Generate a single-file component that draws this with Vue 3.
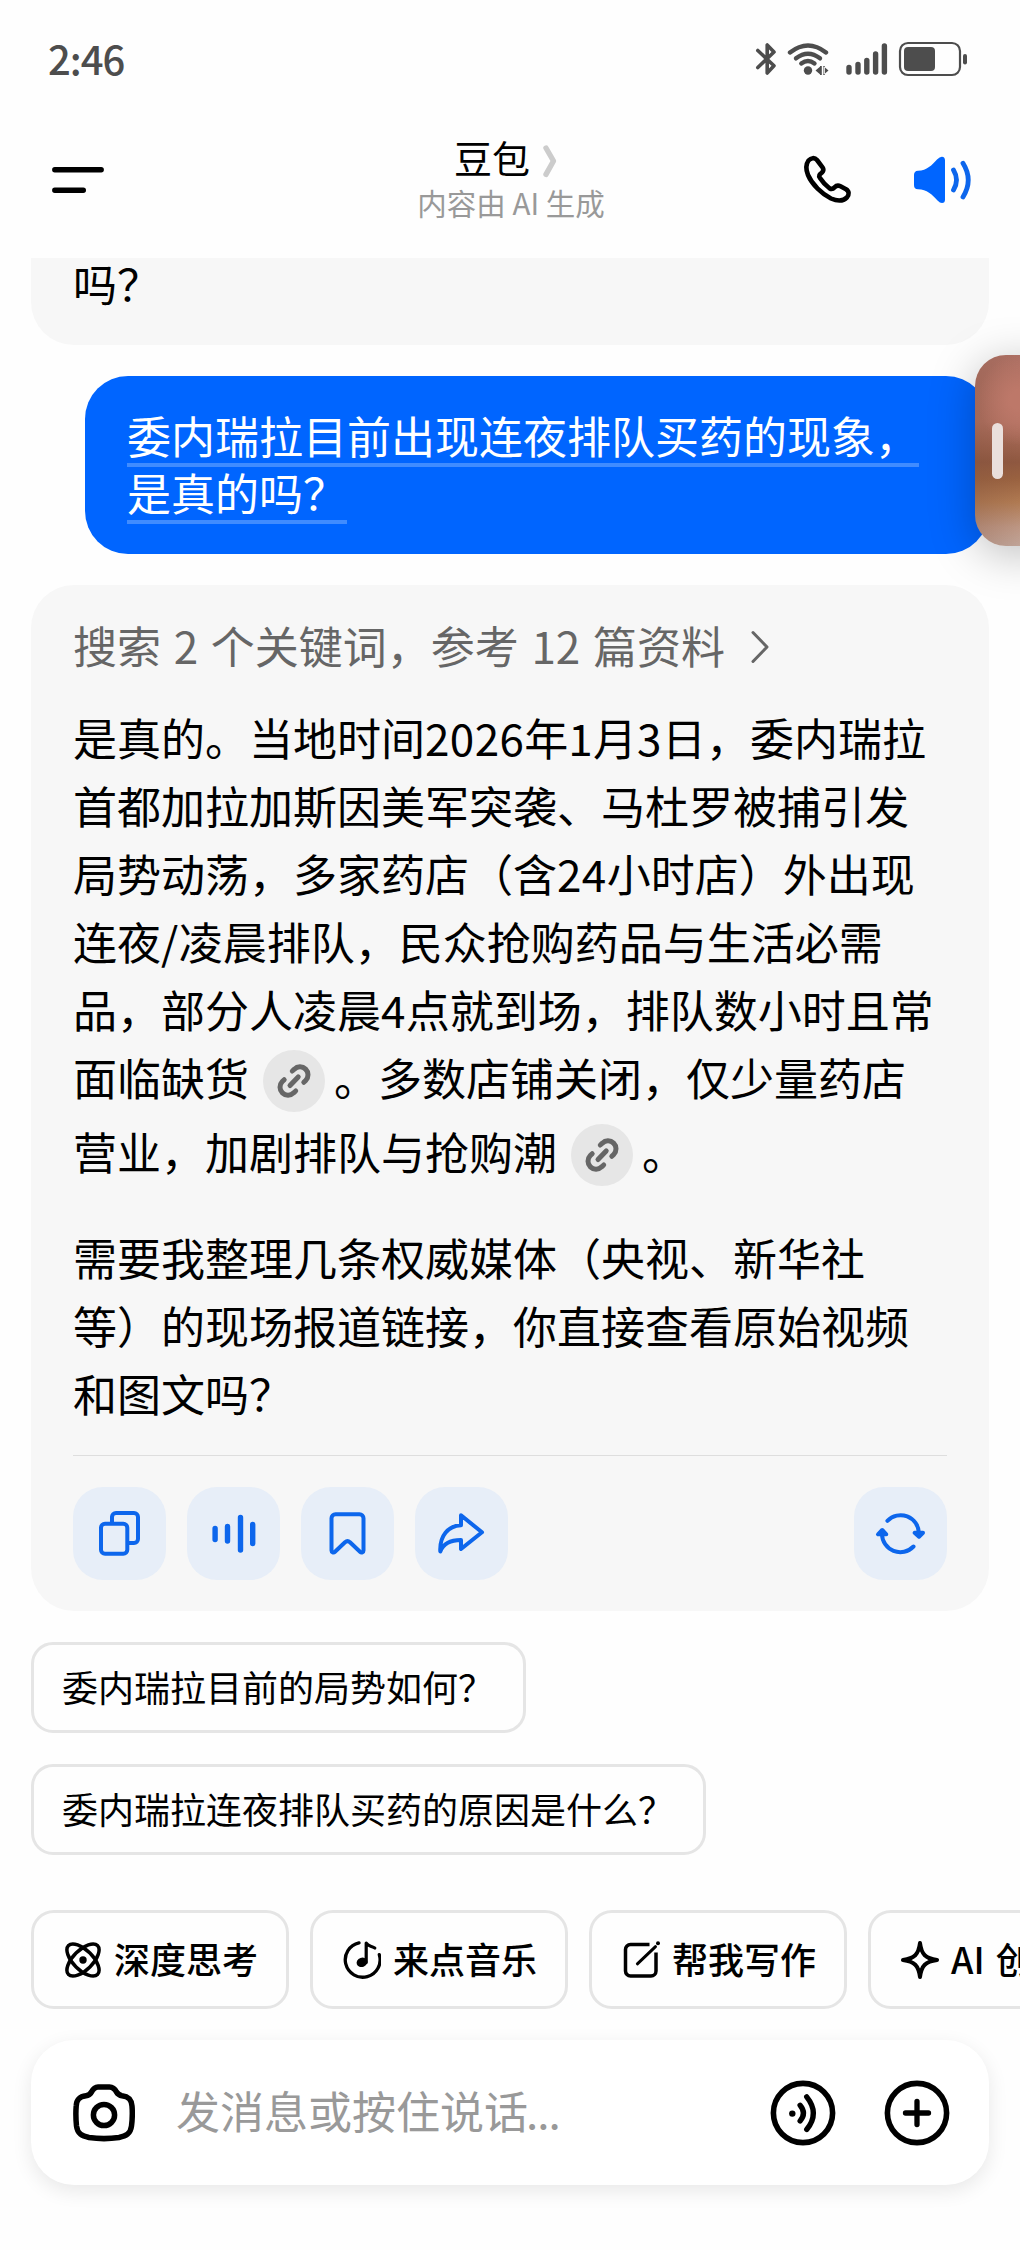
<script setup>
const answerLines = [
  [{ t: '是真的。当地时间' }, { n: '2026' }, { t: '年' }, { n: '1' }, { t: '月' }, { n: '3' }, { t: '日，委内瑞拉' }],
  [{ t: '首都加拉加斯因美军突袭、马杜罗被捕引发' }],
  [{ t: '局势动荡，多家药店（含' }, { n: '24' }, { t: '小时店）外出现' }],
  [{ t: '连夜' }, { n: '/' }, { t: '凌晨排队，民众抢购药品与生活必需' }],
  [{ t: '品，部分人凌晨' }, { n: '4' }, { t: '点就到场，排队数小时且常' }],
  [{ t: '面临缺货' }, { link: true }, { t: '。多数店铺关闭，仅少量药店' }],
  [{ t: '营业，加剧排队与抢购潮' }, { link: true }, { t: '。' }],
]
const followUp = ['需要我整理几条权威媒体（央视、新华社', '等）的现场报道链接，你直接查看原始视频', '和图文吗？']
const suggestions = ['委内瑞拉目前的局势如何？', '委内瑞拉连夜排队买药的原因是什么？']
const chips = [
  { icon: 'think', label: '深度思考' },
  { icon: 'music', label: '来点音乐' },
  { icon: 'write', label: '帮我写作' },
  { icon: 'star', label: 'AI 创作' },
]
</script>

<template>
  <div class="screen">
    <header class="top">
      <div class="status">
        <span class="time">2:46</span>
        <svg class="status-icons" width="220" height="44" viewBox="750 37 220 44" fill="none" stroke="#4d4d4d" stroke-linecap="round" stroke-linejoin="round">
          <path stroke-width="3.6" d="M757.8 50.5 L774 65.800 L767.200 73 V60 M757.800 67.500 L774 52 L767.200 45 V57" />
          <g stroke-width="4.400">
            <path d="M790 52.500 Q808 38.500 826 52.500" />
            <path d="M796 58.300 Q808 49 820 58.300" />
            <path d="M801.300 63.500 Q808 58.500 814.500 63.500" />
          </g>
          <circle cx="808" cy="70.500" r="4.200" fill="#4d4d4d" stroke="none" />
          <path fill="#4d4d4d" stroke="none" d="M815.500 70.500l5-4.300v8.600zM828.500 70.500l-5-4.300v8.600zM820 66h1.800v9h-1.800zM823 66h1.800v9h-1.800z" />
          <path stroke-width="5.400" d="M849 67.500V72M858 64.500V72M866.800 60.500V72M875.600 54V72M884.400 46V72" />
          <rect x="900" y="43" width="60" height="32" rx="8" stroke-width="2.200" />
          <rect x="904" y="47" width="31" height="24" rx="4" fill="#4d4d4d" stroke="none" />
          <path stroke-width="4" d="M965 56V62.500" />
        </svg>
      </div>
      <nav class="nav">
        <svg class="menu" width="60" height="40" viewBox="48 160 60 40" stroke="#000" stroke-width="5.400" stroke-linecap="round">
          <path d="M54.800 169.700H101.200M54.800 190.300H83.300" />
        </svg>
        <div class="heading">
          <div class="title">
            <span>豆包</span>
            <svg width="28" height="48" viewBox="0 0 28 48" fill="none" stroke="#ccc" stroke-width="5.400" stroke-linecap="round" stroke-linejoin="round">
              <path d="M6 15 L13.500 28 L6 41.300" />
            </svg>
          </div>
          <div class="subtitle">内容由 AI 生成</div>
        </div>
        <div class="nav-actions">
          <svg width="56" height="56" viewBox="0 0 56 56" fill="none" stroke="#000" stroke-width="4.600" stroke-linejoin="round">
            <path d="M17 8 L22.500 15.300 C24 17.500 23.800 18.800 22 20.500 C19.500 22.500 18.300 23.500 20 26 C22.500 30 26 33.500 29.500 36.200 C31.500 37.500 32.800 37.300 34.500 35.400 C36.500 33.300 38.300 33.200 40.500 34.300 L46 37.300 C49.300 39.300 49.300 42.500 47 45.300 C43.500 49 37.500 49.300 31 46.500 C22 42 12 32.500 8 23 C5.800 17.500 6 12 8.500 8.500 C11 5.800 14.500 5.200 17 8Z" />
          </svg>
          <svg width="64" height="56" viewBox="0 0 64 56" fill="none" stroke-linecap="round">
            <path fill="#0065ff" d="M4 23 Q4 19 8 18.800 C17 18.500 22 13 27 7.500 Q30 4.500 32 4.700 Q35 5 35 8.500 V47.500 Q35 51 32 51 Q30 51 27.500 48.500 C22 42.500 17 37.600 8 37.300 Q4 37.300 4 33Z" />
            <path stroke="#0d66ec" stroke-width="4.800" d="M43.500 18 Q49.500 28 43.500 38M53 11.300 Q63.500 28 53 45" />
          </svg>
        </div>
      </nav>
    </header>

    <main class="chat">
      <section class="card previous">
        <div class="line">吗？</div>
      </section>

      <section class="question">
        <div><span class="asked"><span>委内瑞拉目前出现连夜排队买药的现象，</span></span></div>
        <div><span class="asked"><span>是真的吗？</span></span></div>
      </section>

      <section class="card answer">
        <div class="search">
          <span>搜索 2 个关键词，参考 12 篇资料</span>
          <svg width="24" height="40" viewBox="0 0 24 40" fill="none" stroke="#666" stroke-width="3" stroke-linecap="round" stroke-linejoin="round">
            <path d="M5 7.500 L19 22 L5 36.500" />
          </svg>
        </div>
        <div class="paragraph">
          <div v-for="(line, i) in answerLines" :key="i" class="line" :class="{ spaced: i === 6 }">
            <template v-for="(part, j) in line" :key="j">
              <span v-if="part.link" class="cite">
                <svg width="62" height="62" viewBox="-31 -31 62 62" fill="none" stroke="#666" stroke-width="5" stroke-linecap="round">
                  <path d="M-4 4.500 L4.200 -4.100" />
                  <path d="M-1.700 -10 L.3 -11.800 A7.900 7.900 0 0 1 11.700 -.6 L9.800 1.300" />
                  <path d="M1.700 10 L-.3 11.800 A7.900 7.900 0 0 1 -11.700 .6 L-9.800 -1.300" />
                </svg>
              </span>
              <span v-else-if="part.n" class="num">{{ part.n }}</span>
              <span v-else>{{ part.t }}</span>
            </template>
          </div>
        </div>
        <div class="paragraph second">
          <div v-for="line in followUp" :key="line" class="line">{{ line }}</div>
        </div>
        <div class="actions">
          <button class="action">
            <svg viewBox="0 0 93 93"><rect x="28" y="36.700" width="26.300" height="30" rx="4" /><path d="M39 36V30a4 4 0 0 1 4-4H61a4 4 0 0 1 4 4V52a4 4 0 0 1-4 4H56" /></svg>
          </button>
          <button class="action">
            <svg viewBox="0 0 93 93"><path stroke-width="5.400" d="M28.100 41.500V52.500M40.500 39.500V54M53.500 30.500V63M65.700 37.500V56.500" /></svg>
          </button>
          <button class="action">
            <svg viewBox="0 0 93 93"><path d="M34.500 27.300H58.500a4 4 0 0 1 4 4V63.500c0 2-2 2.800-3.500 1.300L49 55.300q-2.500-2.200-5 0L34 64.800c-1.500 1.500-3.500 .7-3.500-1.300V31.300a4 4 0 0 1 4-4z" /></svg>
          </button>
          <button class="action">
            <svg viewBox="0 0 93 93"><path d="M46 28.300L67 45.300L46 62V53C37 53 28.500 56 25.300 64.500C24.500 48.500 33 39 46 38.300Z" /></svg>
          </button>
          <button class="action refresh">
            <svg viewBox="0 0 93 93">
              <path d="M33.400 33.800A18.300 18.300 0 0 1 64.900 46M59.500 59.500A18.300 18.300 0 0 1 28 47" />
              <path fill="#0065ff" d="M60.600 45.800H69L65 49.700zM24 47.300H32.300L28.200 43z" />
            </svg>
          </button>
        </div>
      </section>

      <section class="suggestions">
        <div v-for="s in suggestions" :key="s" class="suggestion">{{ s }}</div>
      </section>
    </main>

    <section class="chips">
      <div v-for="c in chips" :key="c.label" class="chip">
        <svg width="38" height="38" viewBox="-19 -19 38 38" fill="none" stroke="#000" stroke-width="3.500" stroke-linecap="round" stroke-linejoin="round">
          <template v-if="c.icon === 'think'">
            <ellipse rx="20.500" ry="9.800" transform="rotate(45)" />
            <ellipse rx="20.500" ry="9.800" transform="rotate(-45)" />
            <circle r="3.700" fill="#000" stroke="none" />
          </template>
          <template v-else-if="c.icon === 'music'">
            <path stroke-width="3.300" d="M-3 -17.200A17.400 17.400 0 1 0 17.300 -5.300" />
            <path d="M4.200 2.500V-17C6 -13.500 9 -14.500 12.800 -12" stroke-width="3.200" />
            <ellipse cx="-.8" cy="2.200" rx="5.500" ry="4.600" transform="rotate(-20)" fill="#000" stroke="none" />
          </template>
          <template v-else-if="c.icon === 'write'">
            <path stroke-linecap="butt" d="M8.500 -15.500H-10.500A5 5 0 0 0 -15.500 -10.500V11A5 5 0 0 0 -10.500 16H10A5 5 0 0 0 15 11V-7.500" />
            <path stroke-width="3" d="M-3.600 3.800L14.500 -13.300" />
            <circle cx="17" cy="-16.700" r="2" fill="#000" stroke="none" />
          </template>
          <path v-else stroke-width="4" d="M0 -17C1.500 -5.500 5.500 -1.500 17 0C5.500 1.500 1.500 5.500 0 17C-1.500 5.500 -5.500 1.500 -17 0C-5.500 -1.500 -1.500 -5.500 0 -17Z" />
        </svg>
        <span>{{ c.label }}</span>
      </div>
    </section>

    <footer class="composer">
      <svg width="62" height="58" viewBox="0 0 62 58" fill="none" stroke="#000" stroke-width="5.500">
        <path d="M25 2.900H36.500C40 2.900 42 5 43.500 8C45 10.500 46.500 11.300 49 11.700C56 12.500 58.500 16 59 22C59.500 28 59.500 34 58.500 42C57.500 50 53 52 46 53.500C36 55 26 55 16 53.500C9 52 4.500 50 3.500 42C2.700 34 2.700 28 3.200 22C3.500 16 6 12.500 13 11.700C16 11.300 17 10.500 18.500 8C20 5 21.500 2.900 25 2.900Z" />
        <circle cx="31" cy="31" r="10.600" />
      </svg>
      <span class="placeholder">发消息或按住说话<span class="dots">...</span></span>
      <svg class="voice" width="66" height="66" viewBox="-33 -33 66 66" fill="none" stroke="#000" stroke-width="5.300" stroke-linecap="round">
        <circle r="29.600" stroke-width="5.600" />
        <circle cx="-10.700" cy=".6" r="3.200" fill="#000" stroke="none" />
        <path d="M-2.900 -7.700Q3.800 .3 -2.900 8M3.700 -16.200Q17 .3 3.700 16.500" />
      </svg>
      <svg width="66" height="66" viewBox="-33 -33 66 66" fill="none" stroke="#000" stroke-width="5.300" stroke-linecap="round">
        <circle r="29.600" stroke-width="5.600" />
        <path d="M-11.500 0H11.500M0 -11.500V11.500" />
      </svg>
    </footer>

    <aside class="edge-panel"><i></i></aside>
  </div>
</template>

<style>
body {
  margin: 0;
  background: #fff;
}
</style>

<style scoped>
.screen {
  position: relative;
  width: 1020px;
  height: 2250px;
  overflow: hidden;
  background: #fefefe;
  color: #000;
  font-family: "Noto Sans CJK SC", "Noto Sans", sans-serif;
  text-spacing-trim: space-all;
}
svg {
  display: block;
  flex: none;
}
.top {
  height: 258px;
}
.status {
  box-sizing: border-box;
  height: 102px;
  padding: 16px 50px 0 48px;
  display: flex;
  align-items: center;
  justify-content: space-between;
}
.time {
  padding-bottom: 3px;
  font-size: 40px;
  font-weight: 500;
  letter-spacing: -1px;
  line-height: 50px;
  color: #4d4d4d;
}
.nav {
  height: 156px;
  padding: 0 46px 0 48px;
  display: grid;
  grid-template-columns: 1fr auto 1fr;
  align-items: center;
}
.heading {
  display: flex;
  flex-direction: column;
  align-items: center;
  padding-bottom: 4px;
}
.title {
  display: flex;
  gap: 10px;
  font-size: 38px;
  line-height: 48px;
}
.subtitle {
  font-size: 29.500px;
  line-height: 42px;
  color: #999;
  white-space: nowrap;
}
.nav-actions {
  display: flex;
  justify-content: flex-end;
  gap: 54px;
}
.chat {
  padding: 0 31px;
}
.card {
  box-sizing: border-box;
  background: #f7f7f7;
  border-radius: 43px;
  padding: 0 42px;
  font-size: 44px;
}
.previous {
  height: 87px;
  overflow: hidden;
  border-radius: 0 0 43px 43px;
}
.previous .line {
  margin-top: -9px;
}
.line {
  display: flex;
  align-items: center;
  height: 68px;
  line-height: 68px;
  white-space: nowrap;
}
.line.spaced {
  margin-top: 6px;
}
.num {
  letter-spacing: .4px;
}
.cite {
  flex: none;
  width: 62px;
  height: 62px;
  margin: 8px 9px 0 14px;
  border-radius: 50%;
  background: #e6e6e6;
}
.question {
  box-sizing: border-box;
  height: 178px;
  margin: 31px 0 31px 54px;
  padding: 30px 42px 0;
  border-radius: 43px;
  background: #0065ff;
  color: #fff;
  font-size: 44px;
  line-height: 57px;
  white-space: nowrap;
}
.question div {
  display: flex;
}
.asked {
  box-sizing: border-box;
  height: 57px;
  padding-top: 1px;
  box-shadow: 0 4px 0 #408cff;
}
.answer {
  height: 1026px;
  padding-top: 26px;
}
.search {
  display: flex;
  align-items: center;
  gap: 23px;
  height: 68px;
  margin-bottom: 24px;
  line-height: 68px;
  color: #666;
  word-spacing: 2.800px;
  white-space: nowrap;
}
.second {
  margin-top: 38px;
}
.actions {
  display: flex;
  gap: 21px;
  margin-top: 28px;
  padding-top: 31px;
  border-top: 1px solid #dedede;
}
.action {
  width: 93px;
  height: 93px;
  padding: 0;
  border: 0;
  border-radius: 30px;
  background: #e7eef8;
}
.action svg {
  width: 93px;
  height: 93px;
  fill: none;
  stroke: #0d66ec;
  stroke-width: 4;
  stroke-linecap: round;
  stroke-linejoin: round;
}
.refresh {
  margin-left: auto;
}
.suggestions {
  display: flex;
  flex-direction: column;
  align-items: flex-start;
  gap: 31px;
  margin-top: 31px;
}
.suggestion {
  box-sizing: border-box;
  height: 91px;
  padding: 0 29px 0 28px;
  border: 3px solid #e5e5e5;
  border-radius: 22px;
  font-size: 36px;
  line-height: 83px;
  white-space: nowrap;
}
.chips {
  display: flex;
  gap: 21px;
  margin-top: 55px;
  padding-left: 31px;
}
.chip {
  box-sizing: border-box;
  flex: none;
  display: flex;
  align-items: center;
  gap: 12px;
  height: 99px;
  padding: 0 28px 0 30px;
  border: 3px solid #e5e5e5;
  border-radius: 23px;
  font-size: 36px;
  font-weight: 500;
  line-height: 50px;
  word-spacing: 3px;
  white-space: nowrap;
}
.chip span {
  padding-bottom: 3px;
}
.composer {
  box-sizing: border-box;
  display: flex;
  align-items: center;
  height: 145px;
  margin: 31px 31px 0;
  padding: 0 39px 0 42px;
  border-radius: 43px;
  background: #fff;
  box-shadow: 0 6px 20px rgba(0, 0, 0, .09);
}
.placeholder {
  margin-left: 41px;
  padding-bottom: 5px;
  font-size: 44px;
  line-height: 60px;
  color: #999;
}
.dots {
  margin-left: -2px;
  letter-spacing: -1px;
}
.voice {
  margin-left: auto;
  margin-right: 48px;
}
.edge-panel {
  position: absolute;
  top: 355px;
  left: 975px;
  width: 90px;
  height: 191px;
  border-radius: 31px;
  background:
    radial-gradient(ellipse 40px 45px at 43px 45px, #bd7869 20%, transparent),
    linear-gradient(90deg, rgba(125, 80, 62, .25), transparent 50%),
    linear-gradient(#ad7064, #b07060 35%, #8f5840 56%, #9a6240 65%, #b07a52 77%, #bd9683 90%, #c0a498);
  box-shadow: 0 8px 46px rgba(0, 0, 0, .26);
}
.edge-panel i {
  display: block;
  width: 11px;
  height: 56px;
  margin: 68px 0 0 17px;
  border-radius: 6px;
  background: #eadfdc;
}
</style>
